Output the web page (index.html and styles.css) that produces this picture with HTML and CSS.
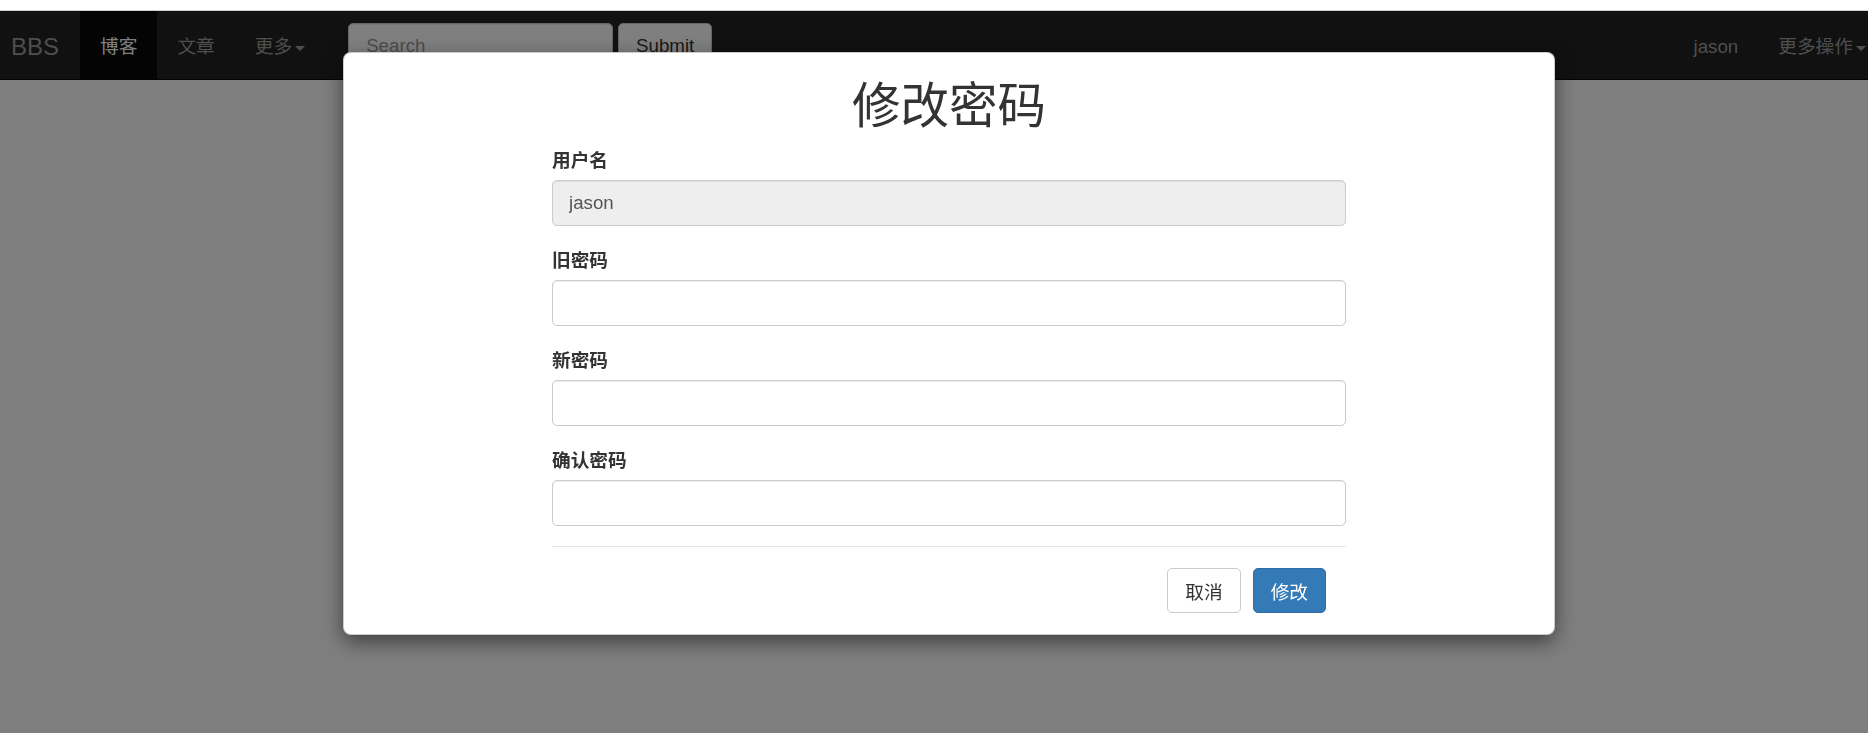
FILE: index.html
```html
<!DOCTYPE html>
<html lang="zh-CN">
<head>
    <meta charset="UTF-8">
    <meta name="viewport" content="width=device-width, initial-scale=1.0">
    <title>BBS - 修改密码</title>
    <link rel="stylesheet" href="styles.css">
</head>
<body>

    <div class="chrome"></div>

    <div class="screen">
        <nav class="navbar">
            <a class="brand" href="#">BBS</a>
            <ul class="nav">
                <li class="active"><a href="#">博客</a></li>
                <li><a href="#">文章</a></li>
                <li><a href="#">更多<span class="caret"></span></a></li>
            </ul>
            <form class="navbar-form">
                <input type="text" class="search" placeholder="Search">
                <button type="button" class="btn-submit">Submit</button>
            </form>
            <ul class="nav nav-right">
                <li><a href="#">jason</a></li>
                <li><a href="#">更多操作<span class="caret"></span></a></li>
            </ul>
        </nav>

        <!-- modal backdrop -->
        <div class="backdrop"></div>
    </div>

    <!-- change password modal -->
    <div class="modal">
        <div class="modal-dialog">
            <div class="modal-body">
                <h1 class="title">修改密码</h1>
                <div class="form-group">
                    <label>用户名</label>
                    <input type="text" class="form-control" value="jason" readonly>
                </div>
                <div class="form-group">
                    <label>旧密码</label>
                    <input type="password" class="form-control">
                </div>
                <div class="form-group">
                    <label>新密码</label>
                    <input type="password" class="form-control">
                </div>
                <div class="form-group last">
                    <label>确认密码</label>
                    <input type="password" class="form-control">
                </div>
                <div class="modal-footer">
                    <button type="button" class="btn btn-default">取消</button>
                    <button type="button" class="btn btn-primary">修改</button>
                </div>
            </div>
        </div>
    </div>

</body>
</html>
```

FILE: styles.css
```css
* {
    box-sizing: border-box;
}

body {
    margin: 0;
    height: 733px;
    overflow: hidden;
    font-family: "Liberation Sans", Arial, "Noto Sans CJK SC", sans-serif;
    font-size: 18.7px;
    color: #333;
    background: #fff;
}

.chrome {
    height: 11px;
    background: #fff;
    border-bottom: 1px solid #cfcfcf;
}

.screen {
    position: relative;
    height: 722px;
}

/* Navbar */
.navbar {
    display: flex;
    align-items: flex-start;
    height: 69px;
    background: #222;
    border-bottom: 1px solid #080808;
}

.brand {
    display: block;
    height: 68px;
    padding: 22px 21px 0 11px;
    font-size: 24px;
    line-height: 27px;
    color: #9d9d9d;
    text-decoration: none;
}

.nav {
    display: flex;
    list-style: none;
    margin: 0;
    padding: 0;
}

.nav a {
    display: block;
    height: 68px;
    padding: 22px 20px 0;
    line-height: 27px;
    color: #9d9d9d;
    text-decoration: none;
}

.nav .active a {
    background: #080808;
    color: #fff;
}

.caret {
    display: inline-block;
    margin-left: 3px;
    vertical-align: middle;
    border-top: 5px solid;
    border-left: 5px solid transparent;
    border-right: 5px solid transparent;
}

.navbar-form {
    display: flex;
    gap: 5px;
    margin: 12px 0 0 23px;
}

.search {
    width: 265px;
    height: 46px;
    padding: 0 17px;
    font: inherit;
    color: #555;
    background: #fff;
    border: 1px solid #ccc;
    border-radius: 5px;
    box-shadow: inset 0 1px 1px rgba(0, 0, 0, 0.075);
}

.search::placeholder {
    color: #999;
}

.btn-submit {
    width: 94px;
    height: 46px;
    font: inherit;
    color: #333;
    background: #fff;
    border: 1px solid #ccc;
    border-radius: 5px;
}

.nav-right {
    margin-left: auto;
}

.nav-right li:last-child a {
    padding-right: 2px;
}

.backdrop {
    position: absolute;
    top: 0;
    left: 0;
    right: 0;
    bottom: 0;
    background: rgba(0, 0, 0, 0.5);
}

/* Modal */
.modal {
    position: fixed;
    top: 0;
    left: 0;
    right: 0;
    bottom: 0;
}

.modal-dialog {
    width: 1212px;
    margin: 52px 0 0 343px;
    background: #fff;
    border: 1px solid rgba(0, 0, 0, 0.2);
    border-radius: 8px;
    box-shadow: 0 7px 20px rgba(0, 0, 0, 0.5);
}

.modal-body {
    width: 794px;
    margin: 0 auto;
}

.title {
    margin: 27px 0 14px;
    font-size: 48.5px;
    line-height: 53px;
    font-weight: 400;
    text-align: center;
}

.form-group {
    margin-bottom: 21px;
}

.form-group.last {
    margin-bottom: 20px;
}

.form-group label {
    display: block;
    margin-bottom: 6px;
    line-height: 27px;
    font-weight: bold;
}

.form-control {
    display: block;
    width: 100%;
    height: 46px;
    padding: 0 16px;
    font: inherit;
    color: #555;
    background: #fff;
    border: 1px solid #ccc;
    border-radius: 5px;
    box-shadow: inset 0 1px 1px rgba(0, 0, 0, 0.075);
}

.form-control[readonly] {
    background: #eee;
}

.modal-footer {
    display: flex;
    justify-content: flex-end;
    gap: 12px;
    padding: 21px 20px 21px;
    border-top: 1px solid #e5e5e5;
}

.btn {
    height: 45px;
    padding: 0 17px;
    font: inherit;
    border: 1px solid;
    border-radius: 5px;
}

.btn-default {
    color: #333;
    background: #fff;
    border-color: #ccc;
}

.btn-primary {
    color: #fff;
    background: #337ab7;
    border-color: #2e6da4;
}
```
